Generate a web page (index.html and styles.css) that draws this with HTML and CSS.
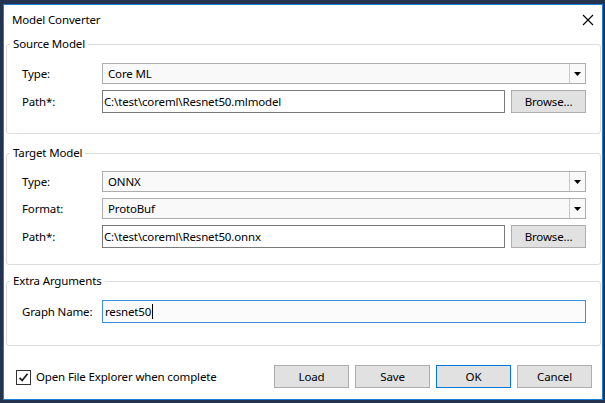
FILE: index.html
```html
<!DOCTYPE html>
<html>
<head>
<meta charset="utf-8">
<link rel="stylesheet" href="styles.css">
</head>
<body>
<div class="window">
  <div class="titlebar">
    <span class="title">Model Converter</span>
    <svg class="close" width="12" height="12" viewBox="0 0 12 12"><path d="M1 1 L11 11 M11 1 L1 11" stroke="#000" stroke-width="1.1" fill="none"/></svg>
  </div>

  <fieldset class="group group-source">
    <legend>Source Model</legend>
    <div class="rows rows-source">
      <label class="lbl">Type:</label>
      <div class="combo"><span class="combo-text">Core ML</span><span class="combo-btn"><svg width="7" height="4" viewBox="0 0 7 4"><path d="M0 0 H7 L3.5 4 Z" fill="#000"/></svg></span></div>
      <label class="lbl">Path*:</label>
      <div class="pathrow"><div class="textbox">C:\test\coreml\Resnet50.mlmodel</div><div class="btn browse">Browse...</div></div>
    </div>
  </fieldset>

  <fieldset class="group group-target">
    <legend>Target Model</legend>
    <div class="rows rows-target">
      <label class="lbl">Type:</label>
      <div class="combo"><span class="combo-text">ONNX</span><span class="combo-btn"><svg width="7" height="4" viewBox="0 0 7 4"><path d="M0 0 H7 L3.5 4 Z" fill="#000"/></svg></span></div>
      <label class="lbl">Format:</label>
      <div class="combo"><span class="combo-text">ProtoBuf</span><span class="combo-btn"><svg width="7" height="4" viewBox="0 0 7 4"><path d="M0 0 H7 L3.5 4 Z" fill="#000"/></svg></span></div>
      <label class="lbl">Path*:</label>
      <div class="pathrow"><div class="textbox">C:\test\coreml\Resnet50.onnx</div><div class="btn browse">Browse...</div></div>
    </div>
  </fieldset>

  <fieldset class="group group-extra">
    <legend>Extra Arguments</legend>
    <div class="rows rows-extra">
      <label class="lbl">Graph Name:</label>
      <div class="textbox focused">resnet50<span class="caret"></span></div>
    </div>
  </fieldset>

  <div class="footer">
    <div class="check">
      <span class="checkbox"><svg width="11" height="11" viewBox="0 0 11 11"><path d="M1.5 5.8 L4.2 8.5 L9.5 1.8" stroke="#222" stroke-width="1.8" fill="none"/></svg></span>
      <span class="check-label">Open File Explorer when complete</span>
    </div>
    <div class="buttons">
      <div class="btn">Load</div>
      <div class="btn">Save</div>
      <div class="btn default">OK</div>
      <div class="btn">Cancel</div>
    </div>
  </div>
</div>
</body>
</html>
```

FILE: styles.css
```css
html, body {
  margin: 0;
  padding: 0;
}
body {
  background: #243350;
  width: 605px;
  height: 403px;
  overflow: hidden;
  padding: 4px 0 0 3px;
  box-sizing: border-box;
  font-family: "Noto Sans", "Open Sans", sans-serif;
  font-size: 11.5px;
  letter-spacing: -0.15px;
  color: #000;
}
.window {
  width: 600px;
  height: 396px;
  box-sizing: border-box;
  border: 1px solid #1a80d6;
  background: #fff;
}
.titlebar {
  height: 31px;
  display: flex;
  align-items: flex-start;
  justify-content: space-between;
  padding-left: 8px;
  padding-right: 8px;
}
.title {
  line-height: 30px;
}
.close {
  margin-top: 9px;
}
.group {
  margin: 0 1px 0 2px;
  padding: 0;
  border: 1px solid #dcdcdc;
  border-radius: 3px;
  min-width: 0;
}
.group legend {
  margin-left: 3px;
  padding: 0 3px;
  line-height: 16px;
  height: 16px;
}
.group-target { margin-top: 11px; }
.group-extra { margin-top: 8px; }

.rows {
  display: grid;
  grid-template-columns: 80px 1fr;
  row-gap: 6px;
  align-items: center;
  padding-left: 15px;
  padding-right: 14px;
}
.rows-source { padding-top: 11px; padding-bottom: 20px; }
.rows-target { padding-top: 10px; padding-bottom: 16px; }
.rows-extra { padding-top: 11px; padding-bottom: 22px; }

.lbl {
  line-height: 16px;
}
.combo {
  height: 21px;
  box-sizing: border-box;
  border: 1px solid #adadad;
  background: #f9f9f9;
  display: flex;
  align-items: center;
}
.combo-text {
  flex: 1;
  padding-left: 5px;
  line-height: 19px;
}
.combo-btn {
  width: 15px;
  height: 19px;
  border-left: 1px solid #c8c8c8;
  display: flex;
  align-items: center;
  justify-content: center;
}
.combo-btn svg { display: block; margin-top: 1px; }
.pathrow {
  display: flex;
  gap: 6px;
}
.textbox {
  flex: 1;
  height: 23px;
  box-sizing: border-box;
  border: 1px solid #7a7a7a;
  background: #fff;
  padding-left: 1px;
  line-height: 21px;
  display: flex;
  align-items: center;
}
.textbox.focused {
  border-color: #3c8fe0;
  background: #fbfbfb;
  padding-left: 2px;
}
.caret {
  display: inline-block;
  width: 1px;
  height: 15px;
  background: #000;
  margin-left: 1px;
}
.btn {
  width: 75px;
  height: 23px;
  box-sizing: border-box;
  border: 1px solid #adadad;
  background: #e1e1e1;
  text-align: center;
  line-height: 21px;
}
.btn.default {
  border-color: #0078d7;
}
.footer {
  display: flex;
  align-items: center;
  justify-content: space-between;
  margin-top: 19px;
  padding-left: 12px;
  padding-right: 10px;
}
.check {
  display: flex;
  align-items: center;
}
.checkbox {
  width: 15px;
  height: 15px;
  box-sizing: border-box;
  border: 1px solid #333;
  display: flex;
  align-items: center;
  justify-content: center;
  margin-top: 2px;
  background: #fff;
}
.checkbox svg { display: block; }
.check-label {
  margin-left: 5px;
  line-height: 16px;
  margin-top: 1px;
}
.buttons {
  display: flex;
  gap: 6px;
}
```
